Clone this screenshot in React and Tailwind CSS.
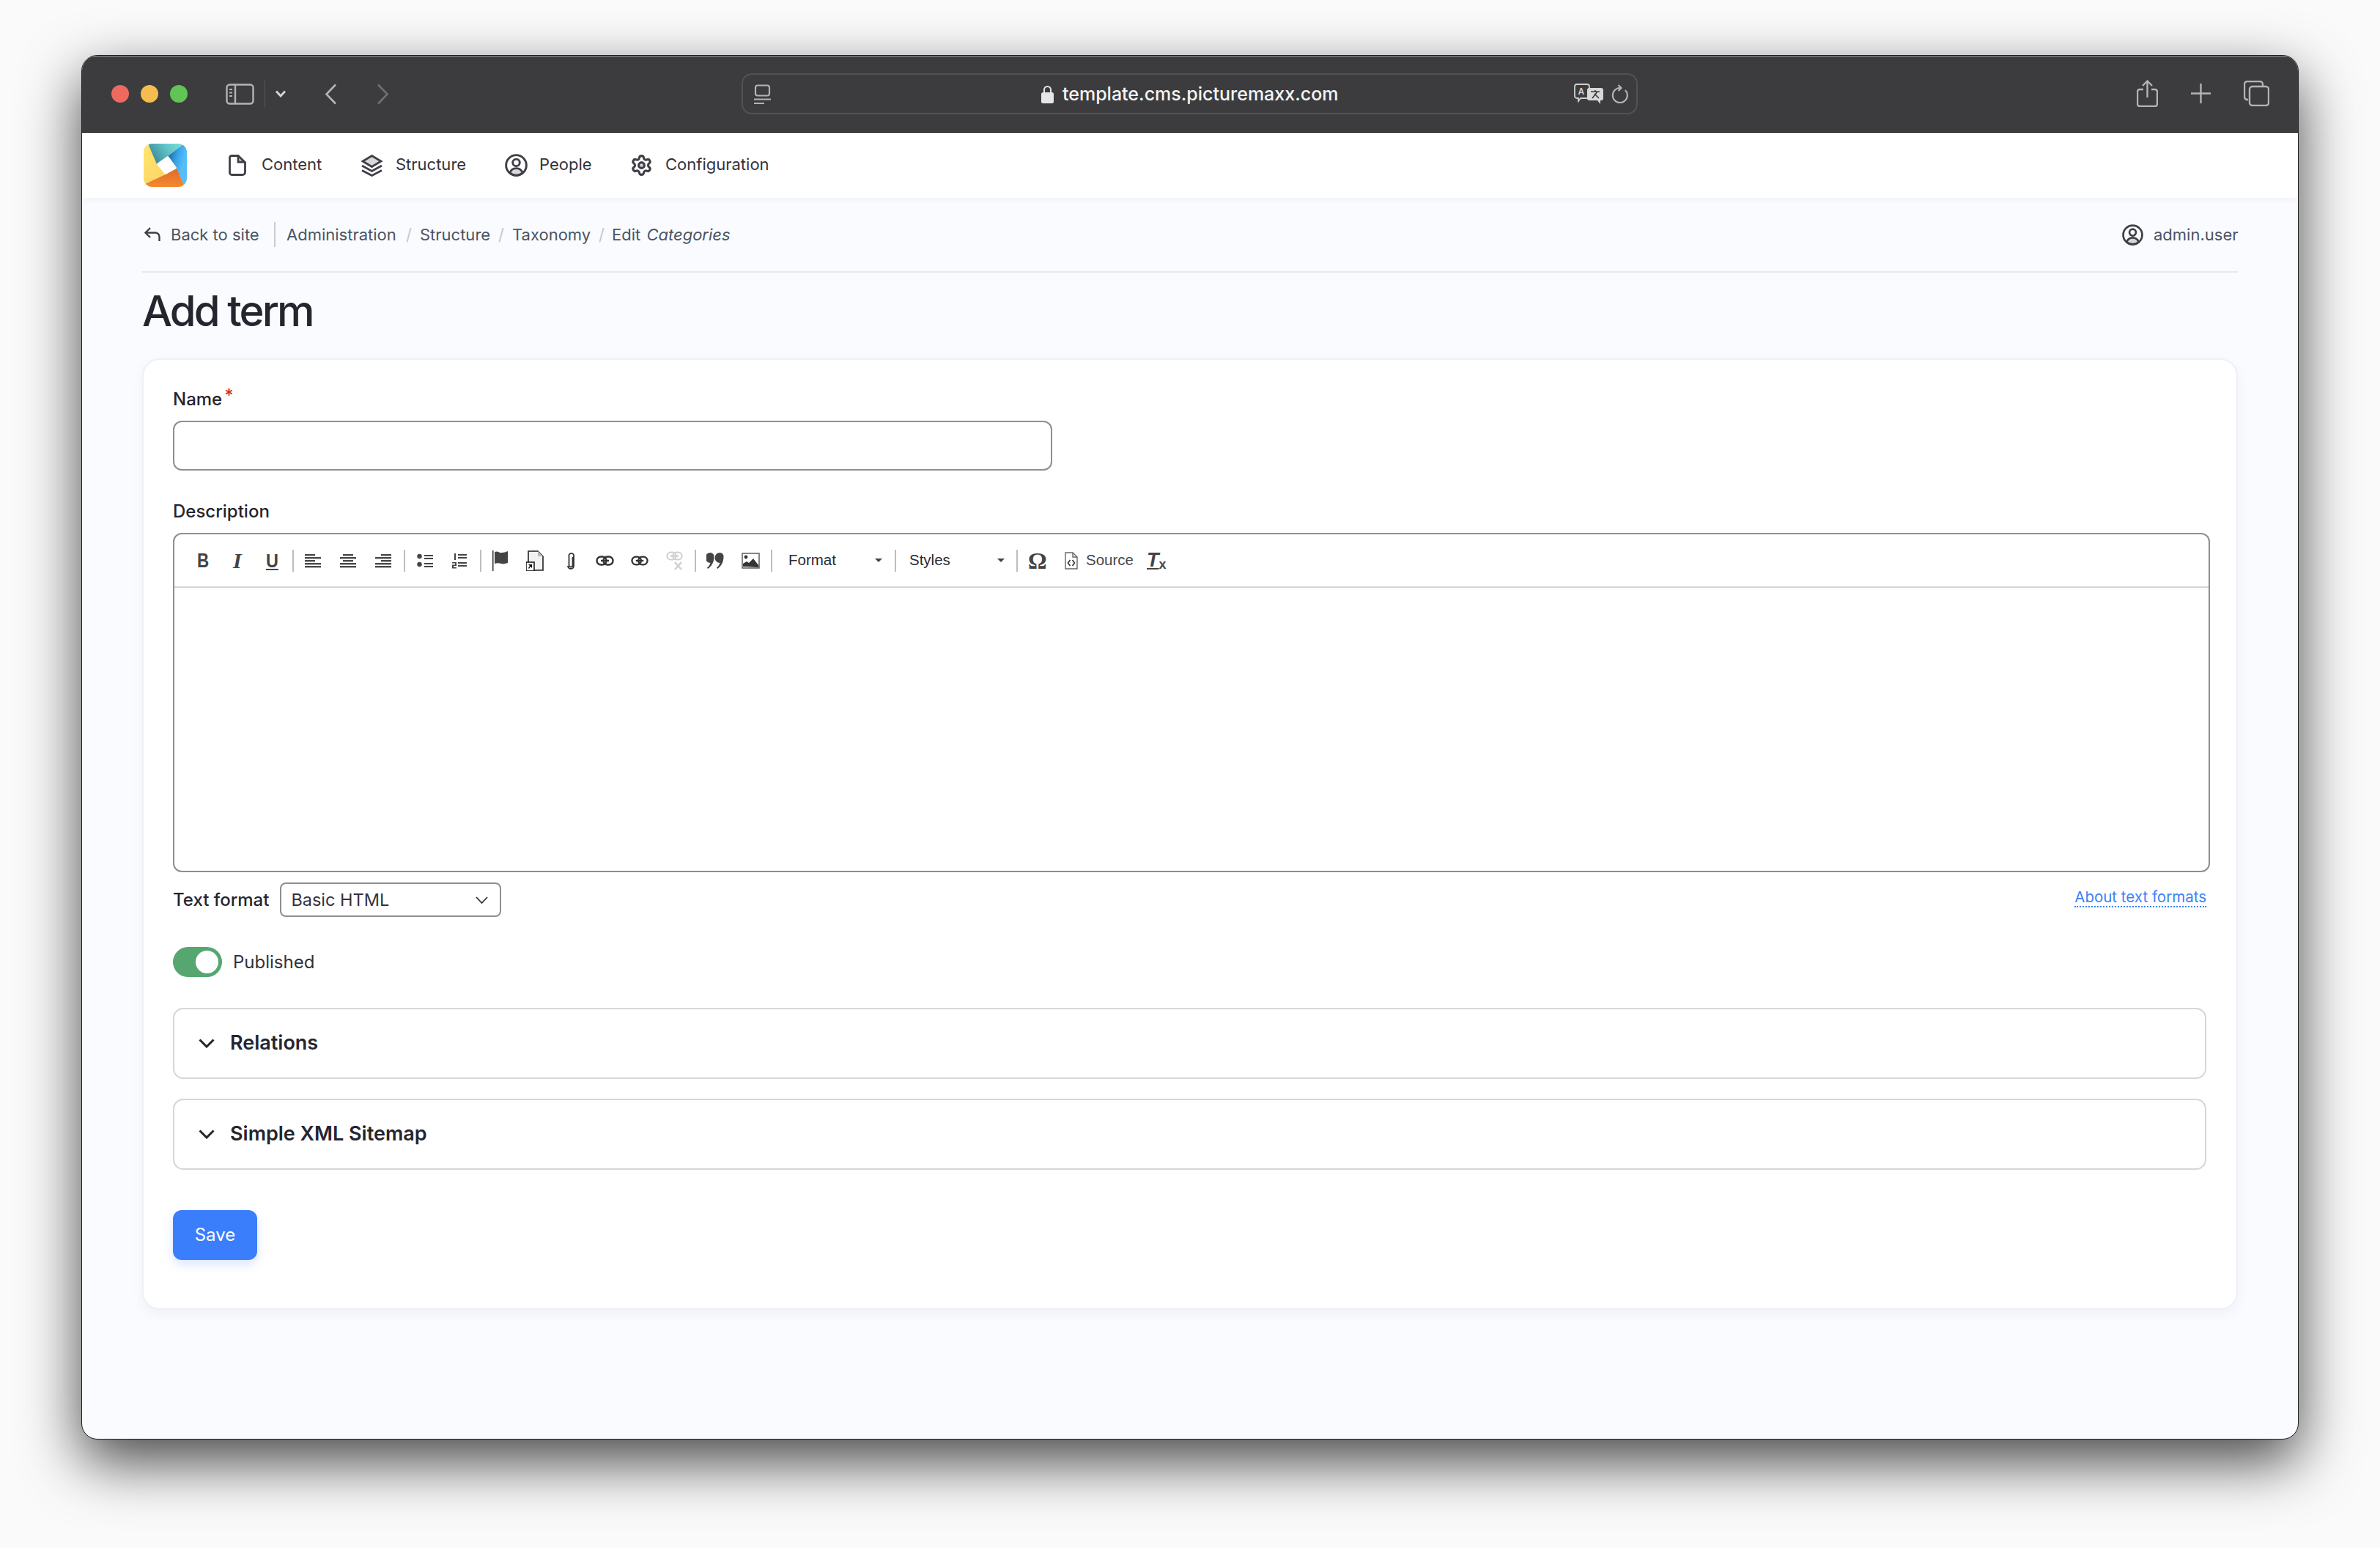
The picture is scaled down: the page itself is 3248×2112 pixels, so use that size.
import { Settings } from "lucide-react";

const chrome = "#b4b4b6";

function Sep({ className = "" }) {
  return <span className={`block w-[2px] h-[30px] bg-[#bdbdbd] shrink-0 ${className}`} />;
}

function Lines({ rows, className = "" }) {
  // alignment icons of the editor toolbar
  return (
    <svg viewBox="0 0 22 20" className={`h-[20px] shrink-0 ${className}`} fill="#4a4a4a">
      {rows.map(([x, w], i) => (
        <rect key={i} x={x} y={i * 4 + 1} width={w} height="2.4" />
      ))}
    </svg>
  );
}

function LinkIcon({ color = "#333", className = "" }) {
  return (
    <svg viewBox="0 0 25 14" className={`h-[14px] shrink-0 ${className}`} fill="none" stroke={color} strokeWidth="2.4">
      <rect x="1.5" y="1.5" width="13" height="11" rx="5.5" />
      <rect x="10.5" y="1.5" width="13" height="11" rx="5.5" />
      <path d="M7 7h11" />
    </svg>
  );
}

function PersonCircle({ className = "" }) {
  return (
    <svg viewBox="0 0 30 30" className={`shrink-0 ${className}`} fill="none" stroke="#3f3f46" strokeWidth="2.800">
      <path d="M6.500 25c1.500-4 5-6 8.500-6s7 2 8.500 6a13 13 0 0 1-17 0z" fill="#d8d8dc" />
      <circle cx="15" cy="15" r="13.400" />
      <circle cx="15" cy="11.500" r="4.600" />
    </svg>
  );
}

function Logo() {
  return (
    <svg viewBox="0 0 59 59" className="w-[59px] h-[59px] rounded-[12px] shrink-0">
      <defs>
        <linearGradient id="teal" x1="0" y1="0.6" x2="1" y2="0.2">
          <stop offset="0" stopColor="#3a8496" />
          <stop offset="0.6" stopColor="#62c6c9" />
          <stop offset="1" stopColor="#78dcd8" />
        </linearGradient>
        <linearGradient id="yellow" x1="0" y1="0" x2="0.6" y2="1">
          <stop offset="0" stopColor="#ffe56e" />
          <stop offset="1" stopColor="#fdd768" />
        </linearGradient>
        <linearGradient id="orange" x1="0.5" y1="0" x2="0.5" y2="1">
          <stop offset="0" stopColor="#e2682c" />
          <stop offset="1" stopColor="#f28a2e" />
        </linearGradient>
        <linearGradient id="deep" x1="0.1" y1="0.1" x2="0.8" y2="0.5">
          <stop offset="0" stopColor="#1c68ab" />
          <stop offset="0.55" stopColor="#3aa4e8" />
          <stop offset="1" stopColor="#55bdf9" />
        </linearGradient>
      </defs>
      <rect width="59" height="59" fill="#fdd768" />
      <polygon points="0,0 6,0 18,28 30,42 0,56" fill="url(#yellow)" />
      <polygon points="30,42 45,33 56,59 0,59 0,56" fill="url(#orange)" />
      <polygon points="33,17 55,0 59,0 59,59 56,59 45,33" fill="url(#deep)" />
      <polygon points="6,0 55,0 33,17 18,28" fill="url(#teal)" />
      <polygon points="33,19 43,33 30,40 20,28" fill="#fff" stroke="#fff" strokeWidth="3.500" strokeLinejoin="round" />
    </svg>
  );
}

function Disclosure({ title, className = "" }) {
  return (
    <div className={`flex items-center h-[97px] w-[2775px] border-2 border-[#d6d6d8] rounded-[14px] pl-[33px] ${className}`}>
      <svg viewBox="0 0 22 13" className="w-[22px] h-[13px] shrink-0" fill="none" stroke="#25252f" strokeWidth="3">
        <path d="M1.5 1.5 11 11l9.5-9.5" />
      </svg>
      <span className="ml-[21px] text-[27px] font-semibold text-[#25252f]">{title}</span>
    </div>
  );
}

function Toolbar() {
  return (
    <div className="flex items-center h-[73px] pl-[31px] border-b-2 border-[#d6d6d6] text-[#444]">
      <span className="w-[15px] text-[28px] leading-none font-bold origin-left scale-x-[0.8] font-['Liberation_Sans',sans-serif]">B</span>
      <span className="ml-[34px] w-[13px] text-[30px] leading-none font-bold italic font-['Liberation_Serif',serif]">I</span>
      <span className="ml-[32px] w-[17px] text-[26px] leading-none font-bold underline underline-offset-2 origin-left scale-x-[0.9] font-['Liberation_Sans',sans-serif]">U</span>
      <Sep className="ml-[19px]" />
      <Lines className="ml-[15px] w-[22px]" rows={[[0, 14], [0, 22], [0, 14], [0, 22], [0, 22]]} />
      <Lines className="ml-[26px] w-[22px]" rows={[[4, 14], [0, 22], [4, 14], [0, 22], [0, 22]]} />
      <Lines className="ml-[26px] w-[22px]" rows={[[8, 14], [0, 22], [8, 14], [0, 22], [0, 22]]} />
      <Sep className="ml-[17px]" />
      <svg viewBox="0 0 22 20" className="ml-[16px] w-[22px] h-[20px] shrink-0" fill="#444">
        <circle cx="3.5" cy="4" r="3.2" />
        <circle cx="3.5" cy="15" r="3.2" />
        <rect x="10" y="2" width="12" height="2" />
        <rect x="10" y="6" width="12" height="2" />
        <rect x="10" y="13" width="12" height="2" />
        <rect x="10" y="17" width="12" height="2" />
      </svg>
      <svg viewBox="0 0 20 22" className="ml-[26px] w-[20px] h-[22px] shrink-0" fill="#444">
        <rect x="8" y="2" width="12" height="2" />
        <rect x="8" y="6" width="12" height="2" />
        <rect x="8" y="13" width="12" height="2" />
        <rect x="8" y="17" width="12" height="2" />
        <rect x="3" y="1" width="2" height="9" />
        <path d="M0 13h6v5H2v2h4v1.500H0v-5h4v-2H0z" />
      </svg>
      <Sep className="ml-[18px]" />
      <svg viewBox="0 0 22 28" className="ml-[15px] w-[22px] h-[28px] shrink-0">
        <rect x="0" y="0" width="1.500" height="28" fill="#333" />
        <path d="M3 2c5-2 6 2 10 1 3 0 5-1 8-2v16c-4 1-6 2-9 1-3-1-5-1-9 0z" fill="#444" />
      </svg>
      <svg viewBox="0 0 24 28" className="ml-[24px] w-[24px] h-[28px] shrink-0">
        <path d="M3 1h13l7 7v19H3z" fill="#f2f2f2" stroke="#222" strokeWidth="1.600" />
        <path d="M16 1v7h7z" fill="#bbb" />
        <rect x="0" y="16" width="11" height="12" fill="#fff" stroke="#111" strokeWidth="1.500" />
        <path d="M3 19h5v5l-2-2-2 3-1-1 2-3z" fill="#111" />
      </svg>
      <svg viewBox="0 0 10 26" className="ml-[32px] w-[10px] h-[26px] shrink-0" fill="none" stroke="#333" strokeWidth="1.800">
        <path d="M7.500 8v11a2.500 2.500 0 0 1-5 0V5a3.500 3.500 0 0 1 6.500 0v15a4 4 0 0 1-8 0" />
      </svg>
      <LinkIcon className="ml-[29px] w-[25px]" />
      <LinkIcon className="ml-[23px] w-[24px]" />
      <svg viewBox="0 0 23 26" className="ml-[24px] w-[23px] h-[26px] shrink-0" fill="none" stroke="#d0d0d0" strokeWidth="2.200">
        <rect x="1.500" y="1.500" width="12" height="10" rx="5" />
        <rect x="9.500" y="1.500" width="12" height="10" rx="5" />
        <path d="M6 6.500h11M12 15l9 10M21 15l-9 10" strokeWidth="2.600" />
      </svg>
      <Sep className="ml-[16px]" />
      <svg viewBox="0 0 24 22" className="ml-[14px] w-[24px] h-[22px] shrink-0" fill="#444">
        <path d="M5.500 0a5 5 0 0 1 5 5.500C10.500 13 7 19 2 22l-1-1.500c2.500-2 4-4.500 4.500-6.500a5.500 5.500 0 0 1 0-14z" />
        <path d="M18.500 0a5 5 0 0 1 5 5.500C23.500 13 20 19 15 22l-1-1.500c2.500-2 4-4.500 4.500-6.500a5.500 5.500 0 0 1 0-14z" />
      </svg>
      <svg viewBox="0 0 25 22" className="ml-[24px] w-[25px] h-[22px] shrink-0">
        <rect x="1" y="1" width="23" height="20" fill="#fff" stroke="#666" strokeWidth="1.600" />
        <circle cx="6" cy="6" r="2.400" fill="#333" />
        <path d="M2 19v-4l5-3 3 2 6-6 7 9v3z" fill="#333" />
      </svg>
      <Sep className="ml-[15px]" />
      <span className="ml-[22px] w-[64px] text-[20.5px] text-[#2a2a33] whitespace-nowrap font-['Liberation_Sans',sans-serif]">Format</span>
      <span className="ml-[54px] w-[9px] h-0 border-x-[5px] border-t-[5px] border-x-transparent border-t-[#444]" />
      <Sep className="ml-[17px]" />
      <span className="ml-[18px] w-[55px] text-[20.5px] text-[#2a2a33] whitespace-nowrap font-['Liberation_Sans',sans-serif]">Styles</span>
      <span className="ml-[65px] w-[9px] h-0 border-x-[5px] border-t-[5px] border-x-transparent border-t-[#444]" />
      <Sep className="ml-[16px]" />
      <span className="ml-[14px] w-[23px] text-[32px] leading-none font-bold text-[#444] font-['Liberation_Serif',serif]">Ω</span>
      <svg viewBox="0 0 18 24" className="ml-[27px] w-[18px] h-[24px] shrink-0" fill="none" stroke="#666" strokeWidth="1.400">
        <path d="M1 1h10l6 6v16H1z" />
        <path d="M11 1v6h6" />
        <path d="M7.500 11 4.500 15l3 4M10.500 11l3 4-3 4" stroke="#333" strokeWidth="1.600" />
      </svg>
      <span className="ml-[11px] w-[64px] text-[20.5px] text-[#474747] whitespace-nowrap font-['Liberation_Sans',sans-serif]">Source</span>
      <span className="ml-[19px] w-[24px] flex items-baseline text-[#444] font-['Liberation_Sans',sans-serif]">
        <span className="text-[27px] leading-none font-bold italic underline underline-offset-2">T</span>
        <span className="text-[18px] leading-none font-bold translate-y-[3px]">x</span>
      </span>
    </div>
  );
}

export default function App() {
  return (
    <div className="w-[3248px] h-[2112px] bg-[#fafafa] pl-[111px] pt-[75px] overflow-hidden font-['Inter',sans-serif]">
      <div className="w-[3026px] h-[1889px] flex flex-col border border-[#1c1c1e] rounded-[22px] overflow-hidden bg-[#f9fbff] shadow-[0_30px_80px_rgba(0,0,0,0.72)]">
        {/* browser chrome */}
        <div className="flex items-center h-[105px] shrink-0 pl-[40px] bg-[#3c3c3e] border-b border-black shadow-[inset_0_2px_0_#6e6e70]">
          <span className="w-[24px] h-[24px] rounded-full bg-[#ee6a5f]" />
          <span className="ml-[16px] w-[24px] h-[24px] rounded-full bg-[#f5bd4f]" />
          <span className="ml-[16px] w-[24px] h-[24px] rounded-full bg-[#61c555]" />
          <svg viewBox="0 0 39 29" className="ml-[52px] w-[39px] h-[29px] shrink-0" fill="none" stroke={chrome} strokeWidth="2.400">
            <rect x="1.500" y="1.500" width="36" height="26" rx="4" />
            <path d="M13 1.500v26" />
            <path d="M5 8h4M5 12.500h4M5 17h4" strokeWidth="2" />
          </svg>
          <span className="ml-[14px] w-[1px] h-[36px] bg-[#58585a]" />
          <svg viewBox="0 0 16 10" className="ml-[13px] w-[16px] h-[10px] shrink-0" fill="none" stroke="#d6d6d8" strokeWidth="2.800">
            <path d="M2 1.500 8 8l6-6.500" />
          </svg>
          <svg viewBox="0 0 17 29" className="ml-[52px] w-[17px] h-[29px] shrink-0" fill="none" stroke={chrome} strokeWidth="2.600">
            <path d="M15 1.500 2.500 14.500 15 27.500" />
          </svg>
          <svg viewBox="0 0 17 29" className="ml-[54px] w-[17px] h-[29px] shrink-0" fill="none" stroke="#707072" strokeWidth="2.600">
            <path d="M2 1.500l12.500 13L2 27.500" />
          </svg>
          <div className="ml-[481px] w-[1223px] h-[56px] flex items-center border-2 border-[#525254] rounded-[14px] pl-[15px]">
            <svg viewBox="0 0 23 27" className="w-[23px] h-[27px] shrink-0" fill="none" stroke={chrome} strokeWidth="2.200">
              <rect x="2" y="1.500" width="19" height="14" rx="3" />
              <path d="M0 20.500h23M0 26h14" />
            </svg>
            <svg viewBox="0 0 17 25" className="ml-[369px] w-[17px] h-[25px] shrink-0">
              <path d="M4 11V6.500a4.500 4.500 0 0 1 9 0V11" fill="none" stroke="#e6e6e6" strokeWidth="2" />
              <rect x="0" y="10" width="17" height="15" rx="2.500" fill="#e6e6e6" />
            </svg>
            <span className="ml-[12px] mt-[2px] w-[379px] text-[25px] font-medium text-[#f4f4f4] whitespace-nowrap">template.cms.picturemaxx.com</span>
            <svg viewBox="0 0 40 28" className="ml-[319px] w-[40px] h-[28px] shrink-0">
              <path d="M4 1h14a3 3 0 0 1 3 3v13a3 3 0 0 1-3 3H9l-3 4v-4H4a3 3 0 0 1-3-3V4a3 3 0 0 1 3-3z" fill="#3c3c3e" stroke="#d0d0d0" strokeWidth="1.800" />
              <text x="5.500" y="15" fontSize="12" fill="#d0d0d0" fontFamily="Inter, sans-serif" fontWeight="600">A</text>
              <path d="M21 6h16a3 3 0 0 1 3 3v11a3 3 0 0 1-3 3h-1v5l-4-5H21a3 3 0 0 1-3-3V9a3 3 0 0 1 3-3z" fill="#d8d8d8" />
              <path d="M23 11h12M29 9v2M25 20l7-9M34 20l-6-6" stroke="#3c3c3e" strokeWidth="1.600" fill="none" />
            </svg>
            <svg viewBox="0 0 24 26" className="ml-[11px] w-[24px] h-[26px] shrink-0" fill="none" stroke={chrome} strokeWidth="2.200">
              <path d="M19 8a10 10 0 1 1-7-3" />
              <path d="M9.500 1l4 4-4 4" />
            </svg>
          </div>
          <svg viewBox="0 0 29 37" className="ml-[681px] -mt-[2px] w-[29px] h-[37px] shrink-0" fill="none" stroke={chrome} strokeWidth="2.400">
            <path d="M9 13H4a3 3 0 0 0-3 3v17a3 3 0 0 0 3 3h21a3 3 0 0 0 3-3V16a3 3 0 0 0-3-3h-5" />
            <path d="M14.500 24V2M8 8l6.500-6.500L21 8" />
          </svg>
          <svg viewBox="0 0 27 27" className="ml-[45px] -mt-[2px] w-[27px] h-[27px] shrink-0" fill="none" stroke={chrome} strokeWidth="2.400">
            <path d="M13.500 0v27M0 13.500h27" />
          </svg>
          <svg viewBox="0 0 35 35" className="ml-[45px] -mt-[2px] w-[35px] h-[35px] shrink-0" fill="none" stroke={chrome} strokeWidth="2.400">
            <path d="M6 26H5a4 4 0 0 1-4-4V5a4 4 0 0 1 4-4h17a4 4 0 0 1 4 4v3" />
            <rect x="8" y="8" width="26" height="26" rx="4" />
          </svg>
        </div>

        {/* admin toolbar */}
        <div className="relative z-10 flex items-center h-[89px] shrink-0 pl-[84px] bg-white text-[22px] text-[#33333d] shadow-[0_2px_10px_rgba(30,40,70,0.05)]">
          <Logo />
          <svg viewBox="0 0 24 29" className="ml-[57px] w-[24px] h-[29px] shrink-0" fill="none" stroke="#3f3f46" strokeWidth="2.800">
            <path d="M13 1.500V10h9z" fill="#d8d8dc" stroke="none" />
            <path d="M4 1.500h9l9.500 9V24a3.500 3.500 0 0 1-3.500 3.500H4.500A3 3 0 0 1 1.500 24V4A2.500 2.500 0 0 1 4 1.500z" />
            <path d="M13 1.500V10h9" />
          </svg>
          <span className="ml-[21px] -mt-[2px] w-[83px] whitespace-nowrap">Content</span>
          <svg viewBox="0 0 31 30" className="ml-[52px] w-[31px] h-[30px] shrink-0" fill="none" stroke="#3f3f46" strokeWidth="2.800">
            <path d="M15.500 1.500 28 9l-12.500 7.500L3 9z" fill="#d8d8dc" />
            <path d="M2 15l13.500 7.500L29 15M2 21.500l13.500 7L29 21.500" />
          </svg>
          <span className="ml-[17px] -mt-[2px] w-[96px] whitespace-nowrap">Structure</span>
          <PersonCircle className="ml-[53px] w-[31px] h-[31px]" />
          <span className="ml-[16px] -mt-[2px] w-[72px] whitespace-nowrap">People</span>
          <Settings className="ml-[52px] w-[31px] h-[31px] shrink-0 text-[#3f3f46] [&_circle]:fill-[#d8d8dc]" strokeWidth={2.4} />
          <span className="ml-[17px] -mt-[2px] whitespace-nowrap">Configuration</span>
        </div>

        {/* page */}
        <div className="flex-1 pl-[82px] pr-[82px]">
          <div className="flex items-center h-[102px] border-b-2 border-[#e5e8ee] text-[22px] text-[#4b5563] whitespace-nowrap">
            <svg viewBox="0 0 22 20" className="ml-[3px] w-[22px] h-[20px] shrink-0" fill="none" stroke="#3f3f46" strokeWidth="2.400">
              <path d="M8 1 1.500 7.500 8 14" />
              <path d="M2 7.500h13a5.500 5.500 0 0 1 5.500 5.500v6" />
            </svg>
            <span className="ml-[14px] w-[121px]">Back to site</span>
            <span className="ml-[20px] w-[2px] h-[34px] bg-[#c9ccd2]" />
            <span className="ml-[15px] w-[150px]">Administration</span>
            <span className="ml-[13px] w-[6px] text-[#c4c7cd]">/</span>
            <span className="ml-[13px] w-[96px]">Structure</span>
            <span className="ml-[11px] w-[6px] text-[#c4c7cd]">/</span>
            <span className="ml-[13px] w-[106px]">Taxonomy</span>
            <span className="ml-[12px] w-[6px] text-[#c4c7cd]">/</span>
            <span className="ml-[12px]">Edit <em className="ml-[2px]">Categories</em></span>
            <PersonCircle className="ml-auto w-[29px] h-[29px]" />
            <span className="ml-[14px] w-[115px]">admin.user</span>
          </div>

          <h1 className="h-[104px] mb-[13px] flex items-center text-[58px] font-medium tracking-[-0.05em] text-[#25252f]">Add term</h1>

          <div className="h-[1298px] pl-[40px] pt-[40px] bg-white border-2 border-[#eef0f4] rounded-[24px] shadow-[0_6px_16px_rgba(40,50,80,0.05)]">
            <div className="flex h-[28px] items-center text-[24px] font-medium text-[#25252f]">
              Name<span className="ml-[3px] -mt-[10px] text-[#dc2626]">*</span>
            </div>
            <div className="mt-[15px] w-[1200px] h-[68px] border-2 border-[#8e8e93] rounded-[12px]" />

            <div className="mt-[42px] h-[28px] flex items-center text-[24px] font-medium text-[#25252f]">Description</div>
            <div className="mt-[15px] w-[2780px] h-[463px] border-2 border-[#8e8e93] rounded-[12px]">
              <Toolbar />
            </div>

            <div className="mt-[14px] w-[2775px] flex items-start">
              <span className="h-[47px] flex items-center text-[24px] font-medium text-[#25252f] whitespace-nowrap">Text format</span>
              <div className="ml-[15px] w-[302px] h-[47px] flex items-center justify-between border-2 border-[#8e8e93] rounded-[8px] pl-[13px] pr-[16px] text-[23.5px] text-[#33333d]">
                Basic HTML
                <svg viewBox="0 0 17 10" className="w-[17px] h-[10px]" fill="none" stroke="#33333d" strokeWidth="1.800">
                  <path d="M1 1l7.500 8L16 1" />
                </svg>
              </div>
              <a className="ml-auto mt-[8px] text-[20.5px] text-[#3b82f6] border-b-2 border-dotted border-[#3b82f6] leading-[24px]">About text formats</a>
            </div>

            <div className="mt-[41px] flex items-center">
              <span className="w-[67px] h-[41px] flex items-center justify-end pr-[5px] bg-[#55a76f] rounded-full">
                <span className="w-[31px] h-[31px] bg-white rounded-full" />
              </span>
              <span className="ml-[15px] text-[24px] text-[#33333d]">Published</span>
            </div>

            <Disclosure title="Relations" className="mt-[42px]" />
            <Disclosure title="Simple XML Sitemap" className="mt-[27px]" />

            <button className="mt-[55px] w-[115px] h-[68px] bg-[#3b7efb] text-white text-[24px] rounded-[12px] shadow-[0_6px_14px_rgba(59,126,251,0.2)]">Save</button>
          </div>
        </div>
      </div>
    </div>
  );
}
